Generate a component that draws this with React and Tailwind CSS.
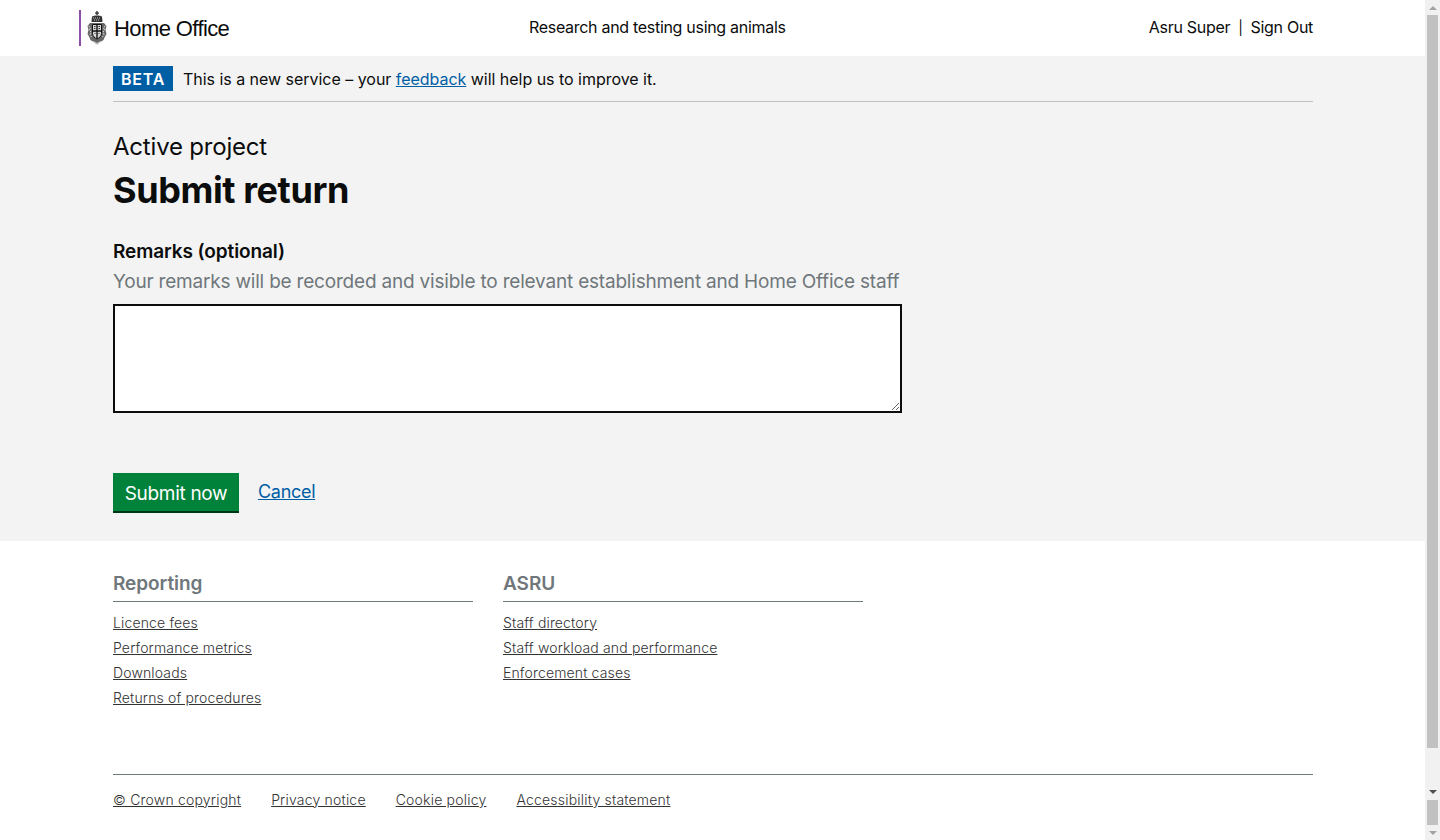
import React from "react";

const reportingLinks = ["Licence fees", "Performance metrics", "Downloads", "Returns of procedures"];
const asruLinks = ["Staff directory", "Staff workload and performance", "Enforcement cases"];
const bottomLinks = ["© Crown copyright", "Privacy notice", "Cookie policy", "Accessibility statement"];

function Crest() {
  return (
    <svg width="20" height="35" viewBox="0 0 20 35" className="block">
      {/* crown */}
      <path d="M9.300 0h1.400v1.500h1.300v1.200h-1.300V4h-1.400V2.700H8V1.500h1.300z" fill="#333" />
      <path d="M5 5.500c2-1.500 8-1.500 10 0l.5 5.500h-11z" fill="#333" />
      <path d="M6 7h8M7 9h6" stroke="#ccc" strokeWidth="1" strokeDasharray="1 1" />
      {/* supporters and shield */}
      <path d="M3 12h14l2.500 3-1 4 1 4-2 3.500-1 2.500-3 2-3.500 2.500L6.500 31l-3-2-1-2.500-2-3.500 1-4-1-4z" fill="#666" />
      <path d="M1.500 15l2 1.500-1 2.500 1.500 2-1 2.500 1.500 2.500M18.500 15l-2 1.500 1 2.500-1.500 2 1 2.500-1.500 2.500" stroke="#ddd" strokeWidth="1" strokeDasharray="2 1" fill="none" />
      <path d="M5.500 13.500h9v9c0 3-2.500 4.500-4.500 5.500-2-1-4.500-2.500-4.500-5.500z" fill="#d8d8d8" stroke="#111" strokeWidth="1" />
      <path d="M10 13.500v14M5.500 20h9" stroke="#111" strokeWidth="1.400" />
      <path d="M7 15.500h1.500M7 17.500h1.500M11.500 15.500h1.500M11.500 17.500h1.500M7.500 22.500h1M11.500 22.500h1" stroke="#333" strokeWidth="1" />
      <path d="M6 30.500l4 2 4-2" stroke="#ddd" strokeWidth="1" fill="none" />
    </svg>
  );
}

function FooterColumn({ title, links }) {
  return (
    <div className="w-[360px]">
      <h3 className="h-[34px] border-b border-[#6f777b] text-[19px] leading-[24px] font-semibold text-[#6f777b] pt-[4px] tracking-[-0.05px]">{title}</h3>
      <ul className="mt-[7.500px]">
        {links.map((l) => (
          <li key={l} className="h-[25.300px] text-[14px] leading-[25px] font-light tracking-[0.15px]">
            <a href="#" className="underline text-[#333]">{l}</a>
          </li>
        ))}
      </ul>
    </div>
  );
}

function Scrollbar() {
  return (
    <div className="w-[15px] h-[840px] bg-[#f1f1f1] flex flex-col items-center shrink-0">
      <div className="h-[15px] flex items-center justify-center">
        <div className="w-0 h-0 border-x-[4px] border-x-transparent border-b-[4px] border-b-[#a3a3a3]" />
      </div>
      <div className="w-[11px] h-[733px] bg-[#c1c1c1]" />
      <div className="h-[52px] w-full flex items-end justify-center pb-[6px]">
        <div className="w-0 h-0 border-x-[4px] border-x-transparent border-t-[4px] border-t-[#505050]" />
      </div>
      <div className="w-[11px] h-[25px] bg-[#c1c1c1]" />
      <div className="flex-1 w-full flex items-center justify-center">
        <div className="w-0 h-0 border-x-[4px] border-x-transparent border-t-[4px] border-t-[#a3a3a3]" />
      </div>
    </div>
  );
}

export default function App() {
  return (
    <div className="flex h-[840px] overflow-hidden bg-white text-[#0b0c0c] font-['Inter',sans-serif]">
      <div className="flex-1 min-w-0">
        {/* Header */}
        <header className="h-[56px] flex items-center pl-[79px] pr-[112px] text-[16px] tracking-[-0.3px]">
          <div className="w-[450px] flex items-center h-[36px] border-l-2 border-[#8f4fa8] pl-[6px]">
            <Crest />
            <span className="ml-[7px] text-[22px] font-['Liberation_Sans',sans-serif] tracking-[-0.6px]">Home Office</span>
          </div>
          <div className="flex-1 pb-[2px]">Research and testing using animals</div>
          <div className="flex items-center gap-[8px] pb-[2px]">
            <span>Asru Super</span>
            <span className="text-[14px]">|</span>
            <a href="#">Sign Out</a>
          </div>
        </header>

        {/* Main */}
        <main className="h-[485px] bg-[#f3f3f3] px-[113px] pt-[10px]">
          <div className="h-[36px] flex items-start border-b border-[#bfc1c3] mr-[-1px]">
            <strong className="w-[60px] h-[25px] bg-[#005ea5] text-white text-[16px] leading-[26px] font-semibold tracking-[0.8px] text-center">BETA</strong>
            <p className="ml-[10px] text-[16px] leading-[26px] tracking-[-0.03px]">
              This is a new service – your <a href="#" className="underline text-[#005ea5]">feedback</a> will help us to improve it.
            </p>
          </div>

          <p className="mt-[29px] text-[24px] leading-[32px] tracking-[-0.2px]">Active project</p>
          <h1 className="mt-[7px] text-[36px] leading-[40px] font-bold tracking-[-0.4px]">Submit return</h1>

          <label className="block mt-[29px] text-[19px] leading-[25px] font-semibold tracking-[-0.1px]">Remarks (optional)</label>
          <p className="mt-[5px] text-[19px] leading-[25px] text-[#6f777b] tracking-[-0.2px]">Your remarks will be recorded and visible to relevant establishment and Home Office staff</p>
          <textarea className="block mt-[10px] w-[789px] h-[109px] border-2 border-[#0b0c0c] bg-white outline-none" />

          <div className="mt-[60px] flex items-start">
            <button className="h-[40px] w-[126px] bg-[#00823b] border-b-2 border-[#003618] text-white text-[19px] leading-[42px] tracking-[-0.3px]">Submit now</button>
            <a href="#" className="ml-[19px] text-[18px] leading-[38px] underline text-[#005ea5] tracking-[-0.3px]">Cancel</a>
          </div>
        </main>

        {/* Footer */}
        <footer className="px-[113px] pt-[27px]">
          <div className="flex gap-[30px] h-[206px]">
            <FooterColumn title="Reporting" links={reportingLinks} />
            <FooterColumn title="ASRU" links={asruLinks} />
          </div>
          <div className="border-t border-[#6f777b] pt-[16px] flex gap-[30px] text-[14px] leading-[18px] font-light tracking-[0.2px] mr-[-1px]">
            {bottomLinks.map((l) => (
              <a key={l} href="#" className="underline text-[#333]">{l}</a>
            ))}
          </div>
        </footer>
      </div>
      <Scrollbar />
    </div>
  );
}
